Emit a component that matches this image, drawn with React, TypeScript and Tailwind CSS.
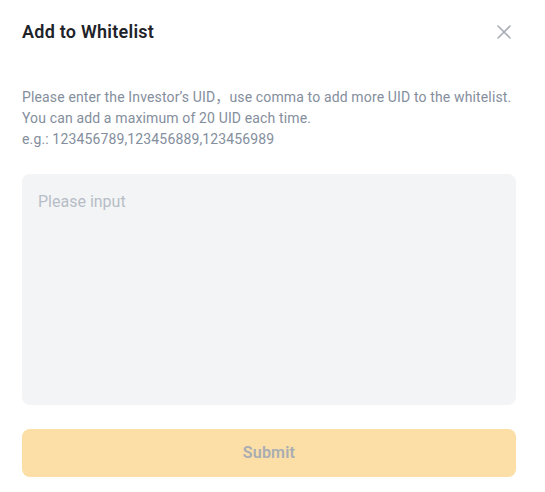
import { useState } from "react";

export default function App() {
  const [value, setValue] = useState("");

  return (
    <div className="w-[545px] h-[492px] bg-white font-['Roboto','Noto_Sans_CJK_JP',sans-serif] px-[22px] pt-5">
      <div className="flex items-center justify-between w-[494px]">
        <h2 className="text-[18px] leading-6 font-semibold tracking-[0.25px] text-[#1e2329]">Add to Whitelist</h2>
        <button className="w-6 h-6 flex items-center justify-center text-[#a7adb6]">
          <svg width="24" height="24" viewBox="0 0 24 24" fill="none">
            <path d="M6 6l12 12M18 6L6 18" stroke="currentColor" strokeWidth="1.6" strokeLinecap="round" />
          </svg>
        </button>
      </div>

      <p className="mt-[43px] text-[14px] leading-[21px] tracking-[0.14px] text-[#848e9c] w-[494px] whitespace-nowrap">
        Please enter the Investor’s UID，use comma to add more UID to the whitelist.
        <br />
        You can add a maximum of 20 UID each time.
        <br />
        e.g.: 123456789,123456889,123456989
      </p>

      <textarea
        value={value}
        onChange={(e) => setValue(e.target.value)}
        placeholder="Please input"
        className="mt-6 block w-[494px] h-[231px] resize-none rounded-lg bg-[#f3f4f6] px-4 pt-4 text-[16px] leading-6 text-[#1e2329] placeholder:text-[#b7bdc6] outline-none"
      />

      <button
        disabled
        className="mt-6 w-[494px] h-12 rounded-lg bg-[#fbdfa7] text-[16px] font-semibold tracking-[0.2px] text-[#a9adb3]"
      >
        Submit
      </button>
    </div>
  );
}
